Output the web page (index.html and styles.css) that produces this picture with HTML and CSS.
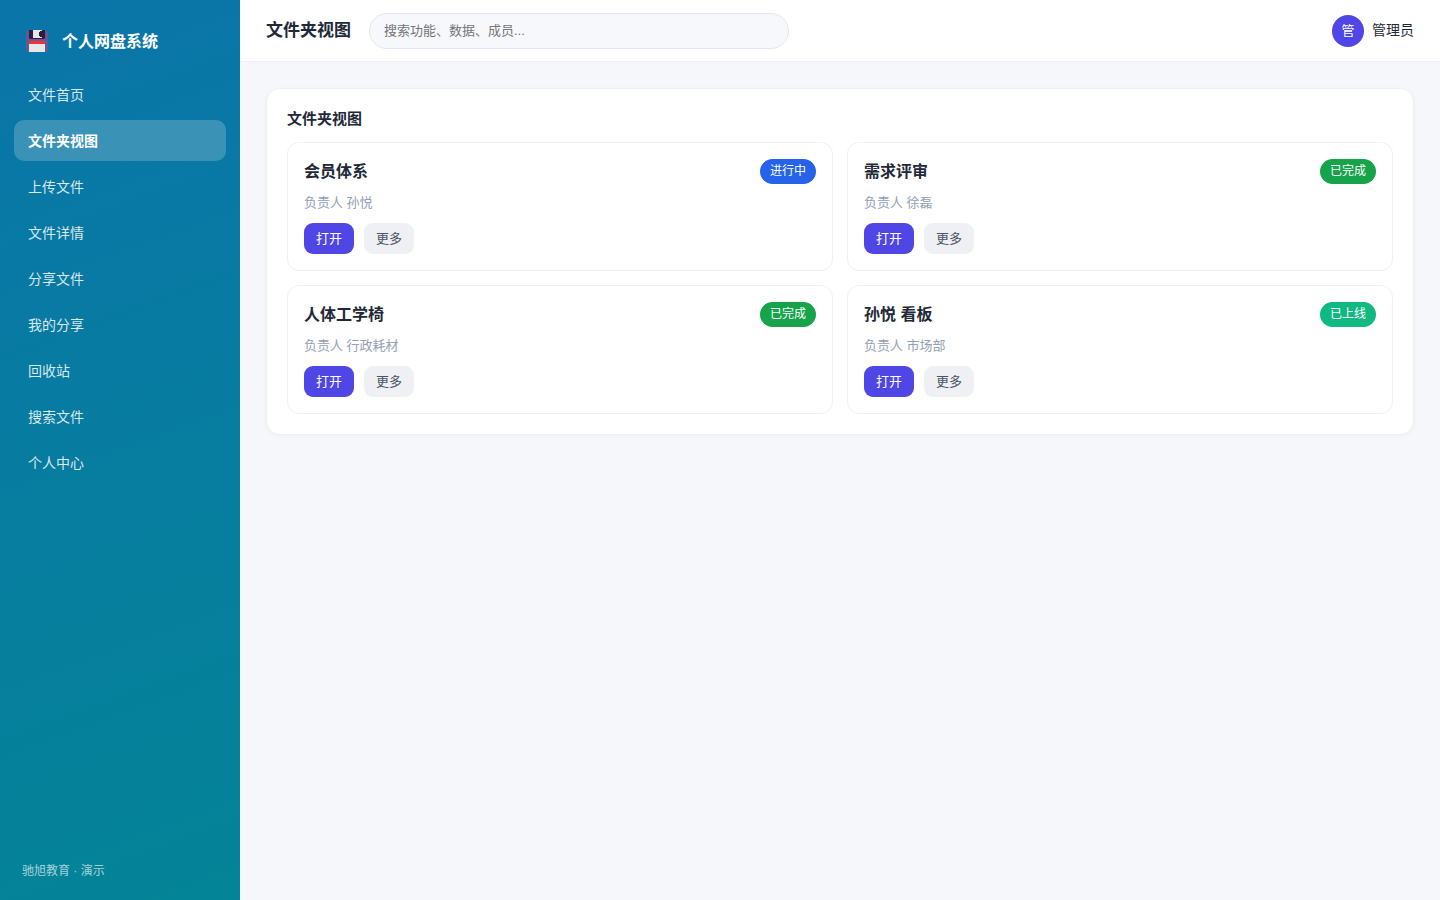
FILE: index.html
```html
<!DOCTYPE html>
<html lang="zh-CN">
<head>
    <meta charset="UTF-8">
    <meta name="viewport" content="width=device-width, initial-scale=1.0">
    <title>文件夹视图 - 个人网盘系统</title>
    <link rel="stylesheet" href="styles.css">
</head>
<body>
    <aside class="sidebar">
        <div class="brand">
            <svg class="logo" viewBox="0 0 22 22" aria-hidden="true">
                <path d="M1 1h20l1 2v17l-1 2H1l-1-2V2z" fill="#635994"/>
                <path d="M3 0h16v8l-1 1H4L3 8z" fill="#321b41"/>
                <path d="M7 0h9v1h-2v1h-1v4h1v1h2v1H7z" fill="#e6e6e6"/>
                <path d="M3 14v-2l1-1h14l1 1v2z" fill="#f8312f"/>
                <path d="M3 14h16v8H3z" fill="#e6e6e6"/>
            </svg>
            <span>个人网盘系统</span>
        </div>
        <nav class="nav">
            <a href="#">文件首页</a>
            <a href="#" class="active">文件夹视图</a>
            <a href="#">上传文件</a>
            <a href="#">文件详情</a>
            <a href="#">分享文件</a>
            <a href="#">我的分享</a>
            <a href="#">回收站</a>
            <a href="#">搜索文件</a>
            <a href="#">个人中心</a>
        </nav>
        <div class="side-foot">驰旭教育 · 演示</div>
    </aside>

    <div class="main">
        <header class="topbar">
            <h1>文件夹视图</h1>
            <input type="search" class="search" aria-label="搜索" placeholder="搜索功能、数据、成员...">
            <div class="user">
                <span class="avatar">管</span>
                <span>管理员</span>
            </div>
        </header>

        <main class="content">
            <section class="panel">
                <h2>文件夹视图</h2>
                <div class="grid">
                    <article class="card">
                        <div class="card-head">
                            <h3>会员体系</h3>
                            <span class="tag tag-blue">进行中</span>
                        </div>
                        <p>负责人 孙悦</p>
                        <div class="actions">
                            <button type="button" class="btn btn-primary">打开</button>
                            <button type="button" class="btn">更多</button>
                        </div>
                    </article>
                    <article class="card">
                        <div class="card-head">
                            <h3>需求评审</h3>
                            <span class="tag tag-green">已完成</span>
                        </div>
                        <p>负责人 徐磊</p>
                        <div class="actions">
                            <button type="button" class="btn btn-primary">打开</button>
                            <button type="button" class="btn">更多</button>
                        </div>
                    </article>
                    <article class="card">
                        <div class="card-head">
                            <h3>人体工学椅</h3>
                            <span class="tag tag-green">已完成</span>
                        </div>
                        <p>负责人 行政耗材</p>
                        <div class="actions">
                            <button type="button" class="btn btn-primary">打开</button>
                            <button type="button" class="btn">更多</button>
                        </div>
                    </article>
                    <article class="card">
                        <div class="card-head">
                            <h3>孙悦 看板</h3>
                            <span class="tag tag-teal">已上线</span>
                        </div>
                        <p>负责人 市场部</p>
                        <div class="actions">
                            <button type="button" class="btn btn-primary">打开</button>
                            <button type="button" class="btn">更多</button>
                        </div>
                    </article>
                </div>
            </section>
        </main>
    </div>
</body>
</html>
```
FILE: styles.css
```css
* {
    box-sizing: border-box;
}

body {
    margin: 0;
    display: flex;
    min-height: 100vh;
    font-family: "Liberation Sans", "Noto Sans CJK SC", sans-serif;
    font-size: 14px;
    line-height: 21px;
    color: #1f2937;
    background: #f5f7fb;
}

h1, h2, h3, p {
    margin: 0;
}

/* sidebar */
.sidebar {
    width: 240px;
    flex-shrink: 0;
    display: flex;
    flex-direction: column;
    padding: 24px 14px 18px;
    color: #fff;
    background: linear-gradient(160deg, #0a75a9, #048497);
}

.brand {
    display: flex;
    align-items: center;
    gap: 14px;
    height: 34px;
    padding: 0 12px;
    margin-bottom: 16px;
    font-size: 16px;
    font-weight: 700;
}

.logo {
    width: 22px;
    height: 22px;
}

.nav {
    display: flex;
    flex-direction: column;
    gap: 5px;
}

.nav a {
    padding: 11px 14px 9px;
    border-radius: 10px;
    color: rgba(255, 255, 255, 0.85);
    text-decoration: none;
}

.nav a.active {
    background: rgba(255, 255, 255, 0.2);
    color: #fff;
    font-weight: 700;
}

.side-foot {
    margin-top: auto;
    padding: 0 8px;
    font-size: 12px;
    color: rgba(255, 255, 255, 0.65);
}

/* top bar */
.main {
    flex: 1;
    min-width: 0;
}

.topbar {
    display: flex;
    align-items: center;
    gap: 18px;
    height: 62px;
    padding: 0 26px;
    background: #fff;
    border-bottom: 1px solid #eef0f4;
}

.topbar h1 {
    font-size: 17px;
    line-height: 24px;
}

.search {
    flex: 0 1 420px;
    min-width: 0;
    height: 36px;
    padding: 0 14px;
    border: 1px solid #e5e7ef;
    border-radius: 18px;
    background: #f7f8fc;
    font-family: inherit;
    font-size: 13px;
    appearance: none;
}

.user {
    display: flex;
    align-items: center;
    gap: 8px;
    margin-left: auto;
}

.avatar {
    display: flex;
    align-items: center;
    justify-content: center;
    width: 32px;
    height: 32px;
    border-radius: 50%;
    background: #4f46e5;
    color: #fff;
    font-size: 13px;
}

/* content */
.content {
    padding: 26px;
}

.panel {
    padding: 18px 20px 20px;
    background: #fff;
    border: 1px solid #eef0f4;
    border-radius: 14px;
    box-shadow: 0 1px 4px rgba(31, 41, 55, 0.04);
}

.panel h2 {
    margin-bottom: 12px;
    font-size: 15px;
    line-height: 23px;
}

.grid {
    display: grid;
    grid-template-columns: repeat(2, 1fr);
    gap: 14px;
}

.card {
    padding: 16px;
    border: 1px solid #eef0f4;
    border-radius: 12px;
}

.card-head {
    display: flex;
    align-items: center;
    justify-content: space-between;
}

.card h3 {
    font-size: 16px;
    line-height: 25px;
}

.card p {
    margin: 9px 0 10px;
    font-size: 13px;
    line-height: 20px;
    color: #94a0b3;
}

.tag {
    padding: 3px 10px;
    border-radius: 999px;
    color: #fff;
    font-size: 12px;
    line-height: 19px;
}

.tag-blue {
    background: #2563eb;
}

.tag-green {
    background: #16a34a;
}

.tag-teal {
    background: #10b981;
}

.actions {
    display: flex;
    gap: 10px;
}

.btn {
    padding: 6px 12px;
    border: none;
    border-radius: 9px;
    background: #eef0f4;
    color: #475569;
    font-family: inherit;
    font-size: 13px;
    line-height: 19px;
    cursor: pointer;
}

.btn-primary {
    background: #4f46e5;
    color: #fff;
}
```
